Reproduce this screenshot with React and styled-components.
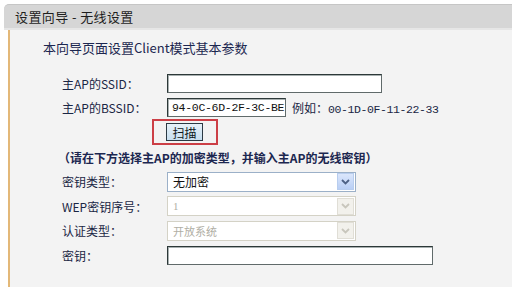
import React from 'react'
import styled, { createGlobalStyle } from 'styled-components'

const Global = createGlobalStyle`
  html, body {
    margin: 0;
    padding: 0;
    background: #ffffff;
    font-family: "Noto Sans CJK SC", "DejaVu Sans", sans-serif;
  }
`

const Page = styled.div`
  width: 512px;
  height: 287px;
  overflow: hidden;
  padding-top: 4px;
  padding-left: 4px;
  box-sizing: border-box;
  background: #fff;
`

const Panel = styled.div`
  height: 100%;
  display: flex;
  flex-direction: column;
`

const Header = styled.div`
  height: 26px;
  display: flex;
  align-items: center;
  padding-left: 11px;
  background: #d6d6d6;
  border-top: 1px solid #c6c6c6;
  border-top-left-radius: 5px;
  border-bottom: 2px solid #e6e6e6;
  font-size: 13px;
  letter-spacing: 0.4px;
  color: #1e1e1e;
  box-sizing: border-box;
`

const Body = styled.div`
  flex: 1;
  background: #f3f3f3;
  margin-left: 4px;
  border-left: 2px solid #e3b878;
  padding: 9px 0 0 33px;
`

const Intro = styled.div`
  font-size: 13px;
  color: #1c2750;
  line-height: 18px;
  margin-bottom: 14px;
`

const Form = styled.div`
  display: grid;
  grid-template-columns: 105px 1fr;
  grid-auto-rows: 24.6px;
  align-items: center;
  padding-left: 19px;
`

const Label = styled.div`
  font-size: 12px;
  color: #1a2644;
  white-space: nowrap;
`

const Field = styled.div`
  display: flex;
  align-items: center;
  gap: 6px;
`

const TextInput = styled.div`
  width: ${p => p.$w}px;
  height: 19px;
  box-sizing: border-box;
  background: #fff;
  border: 1px solid #2c3838;
  border-right-color: #606a6a;
  border-bottom-color: #606a6a;
  box-shadow: inset 1px 1px 0 #a8b0b0;
  font-family: "Liberation Mono", "DejaVu Sans Mono", monospace;
  font-size: 11.5px;
  color: #111;
  line-height: 17px;
  padding-left: 4px;
  letter-spacing: -0.3px;
  overflow: hidden;
  white-space: nowrap;
`

const Example = styled.span`
  font-size: 12px;
  color: #1a2644;
  white-space: nowrap;
`

const Mono = styled.span`
  font-family: "Liberation Mono", "DejaVu Sans Mono", monospace;
  font-size: 11.5px;
  letter-spacing: -0.4px;
`

const ScanMark = styled.div`
  margin-left: -15px;
  width: 66px;
  height: 26px;
  box-sizing: border-box;
  border: 2px solid #cc3f46;
  display: flex;
  align-items: center;
  padding-left: 12px;
`

const ScanButton = styled.div`
  width: 37px;
  height: 18px;
  box-sizing: border-box;
  border: 1px solid #2c3a44;
  background: linear-gradient(#e6f1f8, #c8dff0);
  font-size: 12px;
  color: #101820;
  display: flex;
  align-items: center;
  justify-content: center;
`

const Hint = styled.div`
  grid-column: 1 / 3;
  font-size: 12px;
  font-weight: 700;
  color: #1c2750;
  margin-left: -4px;
  white-space: nowrap;
`

const Select = styled.div`
  width: 189px;
  height: 20px;
  box-sizing: border-box;
  background: #fff;
  border: 1px solid ${p => (p.$disabled ? '#d4d2c6' : '#9bb0c8')};
  display: flex;
  align-items: center;
  padding: 0 1px 0 5px;
`

const SelectText = styled.span`
  flex: 1;
  font-size: ${p => (p.$disabled ? '11px' : '12px')};
  color: ${p => (p.$disabled ? '#b0aea4' : '#111')};
  font-family: ${p =>
    p.$serif ? '"Liberation Serif", serif' : '"Noto Sans CJK SC", sans-serif'};
`

const Arrow = styled.div`
  width: 17px;
  height: 17px;
  box-sizing: border-box;
  border: 1px solid ${p => (p.$disabled ? '#e0ded6' : '#b8cdee')};
  background: ${p =>
    p.$disabled ? '#f2f1ec' : 'linear-gradient(#dbe6fb, #b9cff5)'};
  display: flex;
  align-items: center;
  justify-content: center;
`

function Chevron({ color }) {
  return (
    <svg width="9" height="6" viewBox="0 0 9 6">
      <path d="M1 1 L4.5 4.5 L8 1" fill="none" stroke={color} strokeWidth="1.8" />
    </svg>
  )
}

function Dropdown({ value, disabled, serif }) {
  return (
    <Select $disabled={disabled}>
      <SelectText $disabled={disabled} $serif={serif}>{value}</SelectText>
      <Arrow $disabled={disabled}>
        <Chevron color={disabled ? '#c8c6bc' : '#4d6185'} />
      </Arrow>
    </Select>
  )
}

export default function App() {
  return (
    <>
      <Global />
      <Page>
        <Panel>
          <Header>设置向导 - 无线设置</Header>
          <Body>
            <Intro>本向导页面设置Client模式基本参数</Intro>
            <Form>
              <Label>主AP的SSID：</Label>
              <Field>
                <TextInput $w={215} />
              </Field>

              <Label>主AP的BSSID：</Label>
              <Field>
                <TextInput $w={119}>94-0C-6D-2F-3C-BE</TextInput>
                <Example>
                  例如：<Mono>00-1D-0F-11-22-33</Mono>
                </Example>
              </Field>

              <div />
              <Field>
                <ScanMark>
                  <ScanButton>扫描</ScanButton>
                </ScanMark>
              </Field>

              <Hint>（请在下方选择主AP的加密类型，并输入主AP的无线密钥）</Hint>

              <Label>密钥类型：</Label>
              <Field>
                <Dropdown value="无加密" />
              </Field>

              <Label>WEP密钥序号：</Label>
              <Field>
                <Dropdown value="1" disabled serif />
              </Field>

              <Label>认证类型：</Label>
              <Field>
                <Dropdown value="开放系统" disabled />
              </Field>

              <Label>密钥：</Label>
              <Field>
                <TextInput $w={266} />
              </Field>
            </Form>
          </Body>
        </Panel>
      </Page>
    </>
  )
}
